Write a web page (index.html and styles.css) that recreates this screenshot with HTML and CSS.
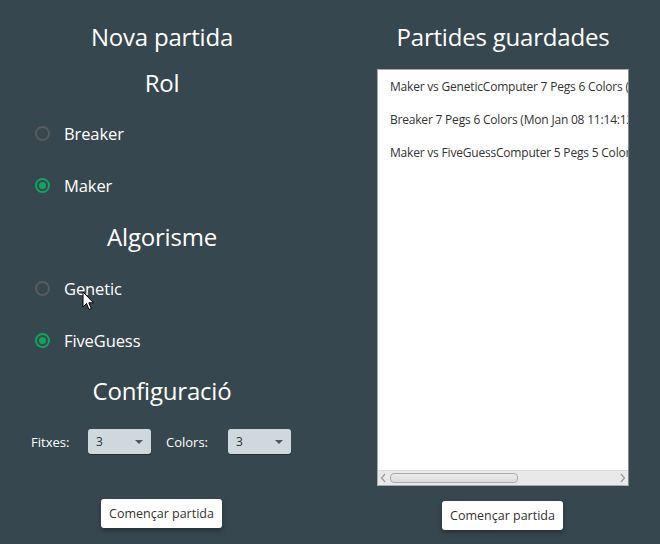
FILE: index.html
```html
<!DOCTYPE html>
<html>
<head>
<meta charset="utf-8">
<link rel="stylesheet" href="styles.css">
</head>
<body>
<div class="app">
  <section class="col col-left">
    <h1 class="title">Nova partida</h1>
    <h2 class="subtitle sub-rol">Rol</h2>
    <label class="radio r1"><span class="dot"></span><span class="rtext">Breaker</span></label>
    <label class="radio r2 on"><span class="dot"></span><span class="rtext">Maker</span></label>
    <h2 class="subtitle sub-alg">Algorisme</h2>
    <label class="radio r3"><span class="dot"></span><span class="rtext">Genetic</span></label>
    <label class="radio r4 on"><span class="dot"></span><span class="rtext">FiveGuess</span></label>
    <h2 class="subtitle sub-conf">Configuració</h2>
    <div class="config">
      <span class="lbl">Fitxes:</span>
      <div class="combo"><span>3</span><span class="arrow"></span></div>
      <span class="lbl lbl2">Colors:</span>
      <div class="combo"><span>3</span><span class="arrow"></span></div>
    </div>
    <div class="btn-row"><button class="btn">Començar partida</button></div>
    <svg class="cursor" width="13" height="20" viewBox="0 0 13 20"><path d="M1 1 L1 16 L4.5 12.5 L7 18.5 L9.3 17.5 L6.8 11.8 L11.5 11.8 Z" fill="#fff" stroke="#000" stroke-width="1" stroke-linejoin="round"/></svg>
  </section>
  <section class="col col-right">
    <h1 class="title">Partides guardades</h1>
    <div class="list">
      <div class="items">
        <div class="item">Maker vs GeneticComputer 7 Pegs 6 Colors (Mon Jan 08 11:20:45 CET 2018)</div>
        <div class="item">Breaker 7 Pegs 6 Colors (Mon Jan 08 11:14:12 CET 2018)</div>
        <div class="item">Maker vs FiveGuessComputer 5 Pegs 5 Colors (Mon Jan 08 11:02:33 CET 2018)</div>
      </div>
      <div class="hscroll">
        <svg class="sarrow" width="11" height="12" viewBox="0 0 11 12"><path d="M7 2 L3.5 6 L7 10" fill="none" stroke="#999" stroke-width="1.2"/></svg>
        <div class="track"><div class="thumb"></div></div>
        <svg class="sarrow" width="11" height="12" viewBox="0 0 11 12"><path d="M4 2 L7.5 6 L4 10" fill="none" stroke="#999" stroke-width="1.2"/></svg>
      </div>
    </div>
    <div class="btn-row"><button class="btn">Començar partida</button></div>
  </section>
</div>
</body>
</html>
```

FILE: styles.css
```css
html, body {
  margin: 0;
  padding: 0;
  background: #37474f;
  width: 660px;
  height: 544px;
  overflow: hidden;
  font-family: "Open Sans", "Noto Sans", "DejaVu Sans", sans-serif;
  color: #ffffff;
}
.app {
  display: flex;
  width: 660px;
  height: 544px;
}
.col {
  display: flex;
  flex-direction: column;
  padding-top: 20px;
  position: relative;
}
.col-left { width: 324px; }
.col-right { width: 314px; margin-left: 22px; }

.title, .subtitle {
  margin: 0;
  font-weight: 400;
  font-size: 24px;
  line-height: 34px;
  height: 34px;
  text-align: center;
  letter-spacing: -0.2px;
}
.sub-rol { margin-top: 12px; }
.sub-alg { margin-top: 23px; }
.sub-conf { margin-top: 22px; }

.radio {
  display: flex;
  align-items: center;
  height: 24px;
  padding-left: 35px;
  font-size: 16.5px;
  letter-spacing: -0.1px;
}
.r1 { margin-top: 21px; }
.r2 { margin-top: 28px; }
.r3 { margin-top: 22px; }
.r4 { margin-top: 28px; }
.dot {
  width: 15px;
  height: 15px;
  box-sizing: border-box;
  border: 2px solid #5b5b5b;
  border-radius: 50%;
  margin-right: 14px;
  position: relative;
}
.radio.on .dot {
  border-color: #14a35e;
}
.radio.on .dot::after {
  content: "";
  position: absolute;
  left: 2px;
  top: 2px;
  width: 7px;
  height: 7px;
  border-radius: 50%;
  background: #14a35e;
}

.config {
  display: flex;
  align-items: center;
  margin-top: 21px;
  padding-left: 31px;
  height: 25px;
  font-size: 13px;
}
.lbl { width: 57px; }
.lbl2 { margin-left: 15px; width: 62px; }
.combo {
  width: 63px;
  height: 25px;
  box-sizing: border-box;
  background: #cfd8dc;
  border-radius: 3px;
  box-shadow: 0 1px 0 rgba(0,0,0,0.35);
  color: #333;
  font-size: 12px;
  display: flex;
  align-items: center;
  justify-content: space-between;
  padding: 0 8px 0 8px;
}
.arrow {
  width: 0;
  height: 0;
  border-left: 4px solid transparent;
  border-right: 4px solid transparent;
  border-top: 4px solid #555;
  margin-top: 1px;
}

.btn-row {
  display: flex;
  justify-content: center;
}
.col-left .btn-row { margin-top: 45px; padding-right: 1px; }
.col-right .btn-row { margin-top: 15px; padding-right: 1px; }
.btn {
  font-family: inherit;
  font-size: 12.5px;
  color: #333;
  background: #fff;
  border: none;
  border-radius: 3px;
  height: 29px;
  width: 121px;
  padding: 0;
  box-shadow: 0 3px 5px rgba(0,0,0,0.3);
}

.list {
  margin: 15px 0 0 31px;
  width: 252px;
  height: 417px;
  box-sizing: border-box;
  background: #fff;
  border: 1px solid #a9a9a9;
  border-right-color: #888;
  display: flex;
  flex-direction: column;
  overflow: hidden;
}
.items {
  flex: 1;
  padding-top: 7px;
  overflow: hidden;
}
.item {
  white-space: nowrap;
  color: #333;
  font-size: 12px;
  letter-spacing: -0.2px;
  height: 33px;
  line-height: 20px;
  padding-left: 12px;
}
.hscroll {
  height: 14px;
  background: #e9e9e9;
  border-top: 1px solid #dcdcdc;
  display: flex;
  align-items: center;
}
.sarrow {
  display: block;
  width: 11px;
  height: 12px;
  flex: none;
}
.track { flex: 1; height: 10px; display: flex; align-items: center; }
.thumb {
  width: 128px;
  height: 10px;
  margin-left: 1px;
  box-sizing: border-box;
  border: 1px solid #aaa;
  border-radius: 4px;
  background: linear-gradient(#ececec, #dcdcdc);
}

.cursor {
  position: absolute;
  left: 82px;
  top: 291px;
}
```
